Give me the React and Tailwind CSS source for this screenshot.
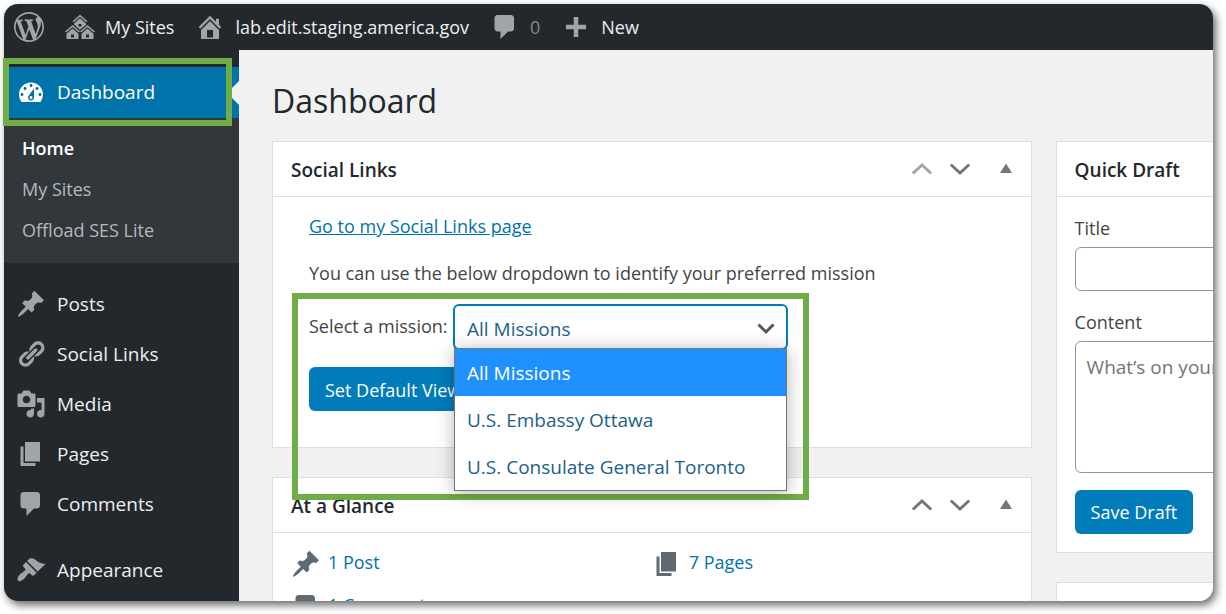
import React from "react";

const ICONS = {
  wordpress:
    "M20 10c0-5.51-4.49-10-10-10C4.48 0 0 4.49 0 10c0 5.52 4.48 10 10 10 5.51 0 10-4.48 10-10zM7.78 15.37L4.37 6.22c.55-.02 1.17-.08 1.17-.08.5-.06.44-1.13-.06-1.11 0 0-1.45.11-2.37.11-.18 0-.37 0-.58-.01C4.12 2.69 6.87 1.11 10 1.11c2.33 0 4.45.87 6.05 2.34-.68-.11-1.65.39-1.65 1.58 0 .74.45 1.36.9 2.1.35.61.55 1.36.55 2.46 0 1.49-1.4 5-1.4 5l-3.03-8.37c.54-.02.82-.17.82-.17.5-.05.44-1.25-.06-1.22 0 0-1.44.12-2.38.12-.87 0-2.33-.12-2.33-.12-.5-.03-.56 1.2-.06 1.22l.92.08 1.26 3.41zM17.41 10c.24-.64.74-1.87.43-4.25.7 1.29 1.05 2.71 1.05 4.25 0 3.29-1.73 6.24-4.4 7.78.97-2.59 1.94-5.2 2.92-7.78zM6.1 18.09C3.12 16.65 1.11 13.53 1.11 10c0-1.3.23-2.48.72-3.59C3.25 10.3 4.67 14.2 6.1 18.09zm4.03-6.63l2.58 6.98c-.86.29-1.76.45-2.71.45-.79 0-1.57-.11-2.29-.33.81-2.38 1.62-4.74 2.42-7.1z",
  sites:
    "M14.27 6.87L10 3.14 5.73 6.87 5 6.14l5-4.38 5 4.38zM14 8.42l-4.05 3.43L6 8.38v-.74l4-3.5 4 3.5v.78zM11 9.7V8H9v1.7h2zm-1.73 4.03L5 10 .73 13.73 0 13l5-4.38L10 13zm10 0L15 10l-4.27 3.73L10 13l5-4.38L20 13zM5 11l4 3.5V18H1v-3.5zm10 0l4 3.5V18h-8v-3.5zm-9 6v-2H4v2h2zm10 0v-2h-2v2h2z",
  home: "M16 8.5l1.53 1.53-1.06 1.06L10 4.6l-6.47 6.49-1.06-1.06L10 2.5l4 4v-2h2v4zm-6-2.46l6 5.99V18H4v-5.97zM12 17v-5H8v5h4z",
  comment:
    "M5 2h9c1.1 0 2 .9 2 2v7c0 1.1-.9 2-2 2h-2l-5 5v-5H5c-1.1 0-2-.9-2-2V4c0-1.1.9-2 2-2z",
  plus: "M8.5 3.3h3v5.2h5.2v3h-5.2v5.2h-3v-5.2H3.3v-3h5.2z",
  dashboard:
    "M3.76 16h12.48c1.1-1.37 1.76-3.11 1.76-5 0-4.42-3.58-8-8-8s-8 3.58-8 8c0 1.89.66 3.63 1.76 5zM10 4c.55 0 1 .45 1 1s-.45 1-1 1-1-.45-1-1 .45-1 1-1zM6 6c.55 0 1 .45 1 1s-.45 1-1 1-1-.45-1-1 .45-1 1-1zm8 0c.55 0 1 .45 1 1s-.45 1-1 1-1-.45-1-1 .45-1 1-1zm-5.37 5.55L12 7v6c0 1.1-.9 2-2 2s-2-.9-2-2c0-.57.24-1.08.63-1.45zM4 10c.55 0 1 .45 1 1s-.45 1-1 1-1-.45-1-1 .45-1 1-1zm12 0c.55 0 1 .45 1 1s-.45 1-1 1-1-.45-1-1 .45-1 1-1zm-5 3c0-.55-.45-1-1-1s-1 .45-1 1 .45 1 1 1 1-.45 1-1z",
  pin: "M10.44 3.02l1.82-1.82 6.36 6.35-1.83 1.82c-1.05-.68-2.48-.57-3.41.36l-.75.75c-.92.93-1.04 2.35-.35 3.41l-1.83 1.82-2.41-2.41-2.8 2.79c-.42.42-3.38 2.71-3.8 2.29s1.86-3.39 2.28-3.81l2.79-2.79L4.1 9.36l1.83-1.82c1.05.69 2.48.57 3.4-.36l.75-.75c.93-.92 1.05-2.35.36-3.41z",
  link: "M17.74 2.76c1.68 1.69 1.68 4.41 0 6.1l-1.53 1.52c-1.12 1.12-2.7 1.47-4.14 1.09l2.62-2.61.76-.77.76-.76c.84-.84.84-2.2 0-3.04-.84-.85-2.2-.85-3.04 0l-.77.76-3.38 3.38c-.37-1.44-.02-3.02 1.1-4.14l1.52-1.53c1.69-1.68 4.42-1.68 6.1 0zM8.59 13.43l5.34-5.34c.42-.42.42-1.1 0-1.52-.44-.43-1.13-.39-1.53 0l-5.33 5.34c-.42.42-.42 1.1 0 1.52.44.43 1.13.39 1.52 0zm-.76 2.29l4.14-4.15c.38 1.44.03 3.02-1.09 4.14l-1.52 1.53c-1.69 1.68-4.41 1.68-6.1 0-1.68-1.68-1.68-4.42 0-6.1l1.53-1.52c1.12-1.12 2.7-1.47 4.14-1.1l-4.14 4.15c-.85.84-.85 2.2 0 3.05.84.84 2.2.84 3.04 0z",
  media:
    "M13 11V4c0-.55-.45-1-1-1h-1.67L9 1H5L3.67 3H2c-.55 0-1 .45-1 1v7c0 .55.45 1 1 1h10c.55 0 1-.45 1-1zM7 4.5c1.38 0 2.5 1.12 2.5 2.5S8.38 9.5 7 9.5 4.5 8.38 4.5 7 5.62 4.5 7 4.5zM14 6h5v10.5c0 1.38-1.12 2.5-2.5 2.5S14 17.88 14 16.5s1.12-2.5 2.5-2.5c.17 0 .34.02.5.05V9h-3V6zm-4 8.05V13h2v3.5c0 1.38-1.12 2.5-2.5 2.5S7 17.88 7 16.5 8.12 14 9.5 14c.17 0 .34.02.5.05z",
  page: "M6 15V2h10v13H6zm-1 1h8v2H3V5h2v11z",
  brush:
    "M14.48 11.06L7.41 3.99l1.5-1.5c.5-.56 2.3-.47 3.51.32 1.21.8 1.43 1.28 2.91 2.1 1.18.64 2.45 1.26 4.45.85zm-.71.71L6.7 4.7 4.93 6.47c-.39.39-.39 1.02 0 1.41l1.06 1.06c.39.39.39 1.03 0 1.42-.6.6-1.43 1.11-2.21 1.69-.35.26-.7.53-1.01.84C1.43 14.23.4 16.08 1.4 17.07c.99 1 2.84-.03 4.18-1.36.31-.31.58-.66.85-1.02.57-.78 1.08-1.61 1.69-2.21.39-.39 1.02-.39 1.41 0l1.06 1.06c.39.39 1.02.39 1.41 0z",
};

function Icon({ name, className }) {
  return (
    <svg
      viewBox="0 0 20 20"
      aria-hidden="true"
      fill="currentColor"
      fillRule="evenodd"
      className={`size-[30px] shrink-0 ${className}`}
    >
      <path d={ICONS[name]} />
    </svg>
  );
}

function BarLink({ icon, label, muted }) {
  return (
    <a href="#" className="flex items-center gap-2.5">
      <Icon name={icon} className="text-[#a0a5aa]" />
      <span className={muted ? "text-[#82878c]" : "text-[#eeeeee]"}>{label}</span>
    </a>
  );
}

function MenuItem({ icon, label }) {
  return (
    <a href="#" className="flex h-[50px] items-center gap-[11px] pl-3 text-[19px] text-[#eeeeee]">
      <Icon name={icon} className="text-[#a0a5aa]" />
      {label}
    </a>
  );
}

function Chevron({ up, faded, label }) {
  return (
    <button
      type="button"
      aria-label={label}
      className={faded ? "text-[#a0a5aa]" : "text-[#72777c]"}
    >
      <svg viewBox="0 0 22 22" className="size-[22px]" fill="none" stroke="currentColor" strokeWidth="3">
        <path d={up ? "M1.8 15.5 11 7l9.2 8.5" : "M1.8 6.5 11 15l9.2-8.5"} />
      </svg>
    </button>
  );
}

function Card({ title, controls, upFaded, children }) {
  return (
    <section className="border border-[#dcdfe2] bg-white">
      <header className="flex h-[55px] items-center border-b border-[#dcdfe2] pr-[18px] pl-[18px]">
        <h2 className="flex-1 pt-0.5 text-[19px] font-semibold text-[#23282d]">{title}</h2>
        {controls && (
          <div className="flex items-center gap-4">
            <Chevron up faded={upFaded} label={`Move ${title} up`} />
            <Chevron label={`Move ${title} down`} />
            <button type="button" aria-label={`Toggle ${title}`} className="ml-3 text-[#72777c]">
              <svg viewBox="0 0 14 22" className="h-[22px] w-[14px]" fill="currentColor">
                <path d="M7 5.5 13 15H1z" />
              </svg>
            </button>
          </div>
        )}
      </header>
      {children}
    </section>
  );
}

function GlanceItem({ icon, label }) {
  return (
    <li>
      <a href="#" className="flex h-[43px] items-center gap-[7px] text-[#0073aa]">
        <Icon name={icon} className="mt-0.5 text-[#606a73]" />
        {label}
      </a>
    </li>
  );
}

const MISSIONS = ["All Missions", "U.S. Embassy Ottawa", "U.S. Consulate General Toronto"];

function MissionPicker() {
  return (
    <div className="relative w-[335px] text-[19px]">
      <select
        id="mission"
        className="h-[46px] w-full appearance-none rounded-md border-2 border-[#007cba] bg-white pt-1 pr-10 pl-3 text-[#1b618b] outline-none"
      >
        {MISSIONS.map((m) => (
          <option key={m}>{m}</option>
        ))}
      </select>
      <svg
        viewBox="0 0 18 12"
        aria-hidden="true"
        className="pointer-events-none absolute top-[19px] right-[13px] h-3 w-[18px]"
        fill="none"
        stroke="#50575e"
        strokeWidth="3"
      >
        <path d="M1.5 1.5 9 9l7.5-7.5" />
      </svg>
      <ul
        role="listbox"
        aria-label="Missions"
        className="absolute top-11 right-px left-px z-20 border border-[#767676] bg-white text-[#1b618b] shadow-[0_2px_16px_rgba(0,0,0,0.3)]"
      >
        {MISSIONS.map((m, i) => (
          <li
            key={m}
            role="option"
            aria-selected={i === 0}
            className={
              i === 0
                ? "flex h-[47px] items-center bg-[#1e90ff] px-3 text-white"
                : "flex h-[47px] items-center px-3"
            }
          >
            {m}
          </li>
        ))}
      </ul>
    </div>
  );
}

export default function App() {
  return (
    <div className="relative h-screen overflow-hidden bg-white pt-1 pr-[13px] pb-[13px] pl-1 font-['Open_Sans','Noto_Sans',sans-serif] text-[18px]">
      <div className="flex h-full flex-col overflow-hidden rounded-[14px] bg-[#f1f1f1] shadow-[3px_4px_8px_rgba(0,0,0,0.6)]">
        <nav aria-label="Toolbar" className="flex h-[46px] shrink-0 items-center gap-[21px] bg-[#23282d] px-[10px]">
          <a href="#" aria-label="About WordPress">
            <Icon name="wordpress" className="text-[#a0a5aa]" />
          </a>
          <BarLink icon="sites" label="My Sites" />
          <BarLink icon="home" label="lab.edit.staging.america.gov" />
          <BarLink icon="comment" label="0" muted />
          <BarLink icon="plus" label="New" />
        </nav>

        <div className="flex min-h-0 flex-1">
          <nav aria-label="Main menu" className="w-[235px] shrink-0 bg-[#23282d] pt-[17px]">
            <a href="#" className="relative flex h-[51px] items-center gap-[11px] bg-[#0073aa] pl-3 text-[19px] text-white">
              <Icon name="dashboard" className="text-white" />
              Dashboard
              <span className="absolute top-3.5 right-0 border-y-[12px] border-r-[12px] border-y-transparent border-r-[#f1f1f1]" />
            </a>
            <div className="mb-4 flex flex-col bg-[#32373c] pt-2.5 pb-3 pl-[18px] text-[#b4b9be]">
              <a href="#" className="flex h-[41px] items-center font-semibold text-white">Home</a>
              <a href="#" className="flex h-[41px] items-center">My Sites</a>
              <a href="#" className="flex h-[41px] items-center">Offload SES Lite</a>
            </div>
            <MenuItem icon="pin" label="Posts" />
            <MenuItem icon="link" label="Social Links" />
            <MenuItem icon="media" label="Media" />
            <MenuItem icon="page" label="Pages" />
            <div className="mb-4">
              <MenuItem icon="comment" label="Comments" />
            </div>
            <MenuItem icon="brush" label="Appearance" />
          </nav>

          <main className="min-w-0 flex-1 pt-[27px] pl-[33px] text-[#444444]">
            <h1 className="mb-4 text-[32px] leading-[48px] text-[#23282d]">Dashboard</h1>
            <div className="grid w-[164%] grid-cols-2 items-start gap-6">
              <div className="flex flex-col gap-[29px]">
                <Card title="Social Links" controls upFaded>
                  <div className="flex flex-col items-start px-9 pt-[15px] pb-9 leading-7">
                    <a href="#" className="text-[#0073aa] underline">Go to my Social Links page</a>
                    <p className="mt-[19px]">
                      You can use the below dropdown to identify your preferred mission
                    </p>
                    <div className="relative mt-[17px] flex flex-col items-start gap-[17px]">
                      <div className="flex items-center">
                        <label htmlFor="mission" className="w-36 pb-0.5">Select a mission:</label>
                        <MissionPicker />
                      </div>
                      <button type="button" className="h-11 rounded-md bg-[#007cba] px-4 pt-0.5 text-white">
                        Set Default View
                      </button>
                      <div
                        aria-hidden="true"
                        className="pointer-events-none absolute -top-[11px] -right-[21px] -left-[17px] z-10 h-[207px] border-6 border-[#70ad47]"
                      />
                    </div>
                  </div>
                </Card>
                <Card title="At a Glance" controls>
                  <ul className="grid grid-cols-2 px-[18px] pt-2 pb-4">
                    <GlanceItem icon="pin" label="1 Post" />
                    <GlanceItem icon="page" label="7 Pages" />
                    <GlanceItem icon="comment" label="1 Comment" />
                  </ul>
                </Card>
              </div>

              <div className="flex flex-col gap-[29px]">
                <Card title="Quick Draft">
                  <form className="flex flex-col items-start px-[18px] pt-[17px] pb-[18px] leading-7">
                    <label htmlFor="draft-title">Title</label>
                    <input
                      id="draft-title"
                      type="text"
                      className="mt-[5px] h-11 w-full rounded-md border border-[#8d96a0] px-3 outline-none"
                    />
                    <label htmlFor="draft-content" className="mt-[17px]">Content</label>
                    <textarea
                      id="draft-content"
                      placeholder="What’s on your mind?"
                      className="mt-[5px] h-[132px] w-full resize-none rounded-md border border-[#8d96a0] px-[11px] py-[11px] text-[19px] leading-7 outline-none placeholder:text-[#757575]"
                    />
                    <button type="button" className="mt-[17px] h-11 rounded-md bg-[#007cba] px-4 text-white">
                      Save Draft
                    </button>
                  </form>
                </Card>
                <Card title="WordPress Events and News" />
              </div>
            </div>
          </main>
        </div>
      </div>
      <div
        aria-hidden="true"
        className="pointer-events-none absolute top-[58px] left-[3px] h-[68px] w-[229px] border-6 border-[#70ad47]"
      />
    </div>
  );
}
